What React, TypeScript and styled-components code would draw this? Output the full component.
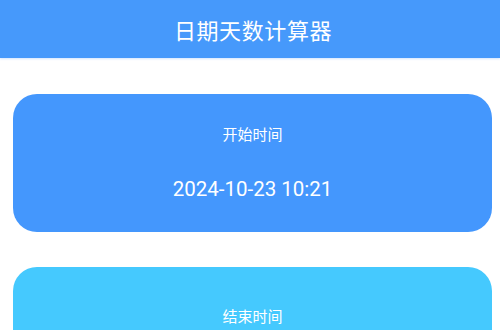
import React from "react";
import styled, { createGlobalStyle } from "styled-components";

const GlobalStyle = createGlobalStyle`
    html, body {
        margin: 0;
        padding: 0;
        background: #ffffff;
        font-family: Roboto, "Noto Sans CJK SC", sans-serif;
    }
`;

const StyledHeader = styled.header`
    height: 58px;
    background-color: #4699fb;
    display: flex;
    align-items: center;
    justify-content: center;
    padding-left: 6px;
    box-sizing: border-box;
    box-shadow: 0 1px 2px rgba(70, 153, 251, 0.25);
`;

const Title = styled.h1`
    margin: 0;
    color: #ffffff;
    font-size: 22px;
    font-weight: 400;
    letter-spacing: 0.6px;
`;

const StyledMain = styled.main`
    display: flex;
    flex-direction: column;
    gap: 35px;
    padding: 36px 8px 0 13px;
    height: 272px;
    box-sizing: border-box;
    overflow: hidden;
`;

interface CardProps {
    bg: string;
    top: number;
}

const Card = styled.section<CardProps>`
    flex-shrink: 0;
    background-color: ${props => props.bg};
    border-radius: 24px;
    height: 138px;
    box-sizing: border-box;
    padding-top: ${props => props.top}px;
    display: flex;
    flex-direction: column;
    align-items: center;
    color: #ffffff;
`;

const Label = styled.div`
    font-size: 15px;
    line-height: 22px;
`;

const DateText = styled.div`
    margin-top: 29px;
    font-size: 20.5px;
    line-height: 28px;
`;

const App = () => {
    return (
        <>
            <GlobalStyle />
            <StyledHeader>
                <Title>日期天数计算器</Title>
            </StyledHeader>
            <StyledMain>
                <Card bg="#4497fd" top={30}>
                    <Label>开始时间</Label>
                    <DateText>2024-10-23 10:21</DateText>
                </Card>
                <Card bg="#45c9fe" top={39}>
                    <Label>结束时间</Label>
                </Card>
            </StyledMain>
        </>
    );
};

export default App;
